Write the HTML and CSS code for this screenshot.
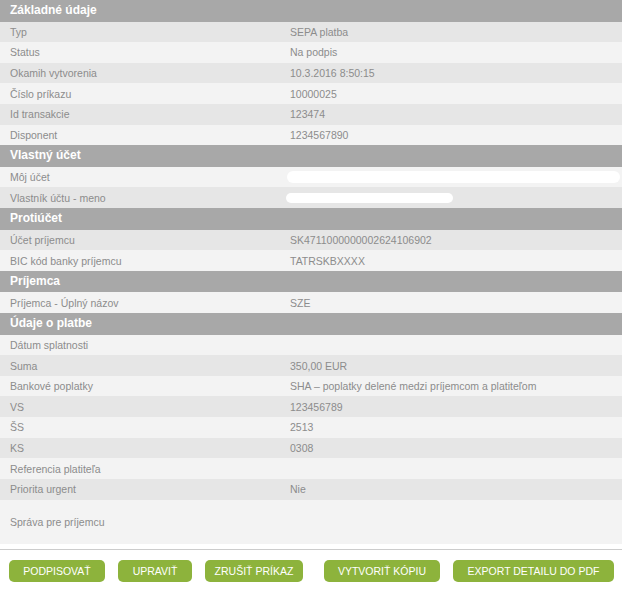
FILE: index.html
```html
<!DOCTYPE html>
<html lang="sk">
<head>
<meta charset="utf-8">
<title>Detail príkazu</title>
<link rel="stylesheet" href="styles.css">
</head>
<body>
<div class="detail">
  <div class="section">Základné údaje</div>
  <div class="row dark"><span class="label">Typ</span><span class="value">SEPA platba</span></div>
  <div class="row light"><span class="label">Status</span><span class="value">Na podpis</span></div>
  <div class="row dark"><span class="label">Okamih vytvorenia</span><span class="value">10.3.2016 8:50:15</span></div>
  <div class="row light"><span class="label">Číslo príkazu</span><span class="value">10000025</span></div>
  <div class="row dark"><span class="label">Id transakcie</span><span class="value">123474</span></div>
  <div class="row light"><span class="label">Disponent</span><span class="value">1234567890</span></div>

  <div class="section">Vlastný účet</div>
  <div class="row light"><span class="label">Môj účet</span><span class="value"><span class="redact redact-long"></span></span></div>
  <div class="row dark"><span class="label">Vlastník účtu - meno</span><span class="value"><span class="redact redact-short"></span></span></div>

  <div class="section">Protiúčet</div>
  <div class="row dark"><span class="label">Účet príjemcu</span><span class="value">SK4711000000002624106902</span></div>
  <div class="row light"><span class="label">BIC kód banky príjemcu</span><span class="value">TATRSKBXXXX</span></div>

  <div class="section">Príjemca</div>
  <div class="row light"><span class="label">Príjemca - Úplný názov</span><span class="value">SZE</span></div>

  <div class="section">Údaje o platbe</div>
  <div class="row light"><span class="label">Dátum splatnosti</span><span class="value"></span></div>
  <div class="row dark"><span class="label">Suma</span><span class="value">350,00 EUR</span></div>
  <div class="row light"><span class="label">Bankové poplatky</span><span class="value">SHA – poplatky delené medzi príjemcom a platiteľom</span></div>
  <div class="row dark"><span class="label">VS</span><span class="value">123456789</span></div>
  <div class="row light"><span class="label">ŠS</span><span class="value">2513</span></div>
  <div class="row dark"><span class="label">KS</span><span class="value">0308</span></div>
  <div class="row light"><span class="label">Referencia platiteľa</span><span class="value"></span></div>
  <div class="row dark"><span class="label">Priorita urgent</span><span class="value">Nie</span></div>
  <div class="row light tall"><span class="label">Správa pre príjemcu</span><span class="value"></span></div>
</div>

<div class="actions">
  <button class="btn btn-sign" type="button">PODPISOVAŤ</button>
  <button class="btn btn-edit" type="button">UPRAVIŤ</button>
  <button class="btn btn-cancel" type="button">ZRUŠIŤ PRÍKAZ</button>
  <button class="btn btn-copy" type="button">VYTVORIŤ KÓPIU</button>
  <button class="btn btn-export" type="button">EXPORT DETAILU DO PDF</button>
</div>
</body>
</html>
```

FILE: styles.css
```css
html, body {
  margin: 0;
  padding: 0;
  background: #ffffff;
}

body {
  width: 622px;
  font-family: "Liberation Sans", Arial, sans-serif;
  font-size: 10.5px;
  color: #8c8c8c;
}

.detail {
  display: flex;
  flex-direction: column;
}

.section {
  height: 21.5px;
  line-height: 21.5px;
  background: #a8a8a8;
  color: #ffffff;
  font-weight: bold;
  font-size: 12px;
  padding-left: 10px;
}

.row {
  display: grid;
  grid-template-columns: 280px 1fr;
  align-items: center;
  height: 20.65px;
  padding-left: 10px;
}

.row.dark {
  background: #e6e6e6;
}

.row.light {
  background: #f3f3f3;
}

.row.tall {
  height: 44px;
}

.value {
  display: flex;
  align-items: center;
}

.redact {
  display: block;
  background: #ffffff;
  border-radius: 6px;
}

.redact-long {
  width: 333px;
  height: 12px;
  margin-left: -3px;
}

.redact-short {
  width: 167px;
  height: 10px;
  margin-left: -4px;
}

.actions {
  margin-top: 5px;
  border-top: 1px solid #cccccc;
  padding: 10px 0 0 9px;
  display: flex;
  gap: 13px;
}

.btn {
  height: 22px;
  border: none;
  border-radius: 5px;
  background: #8db33c;
  color: #ffffff;
  font-family: "Liberation Sans", Arial, sans-serif;
  font-size: 10.5px;
  padding: 0;
  cursor: pointer;
}

.btn-sign { width: 96px; }
.btn-edit { width: 74px; }
.btn-cancel { width: 98px; margin-right: 8px; }
.btn-copy { width: 116px; }
.btn-export { width: 161px; }
```
